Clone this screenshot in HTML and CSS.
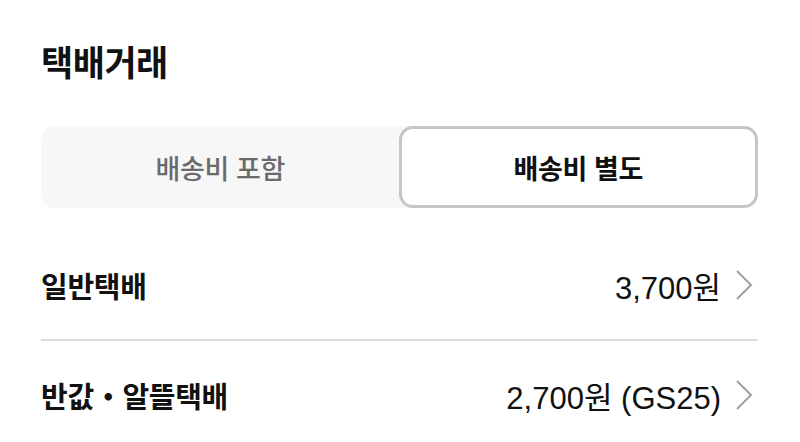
FILE: index.html
```html
<!DOCTYPE html>
<html lang="ko">
<head>
<meta charset="utf-8">
<link rel="stylesheet" href="styles.css">
</head>
<body>
<div class="page">
  <h1 class="title">택배거래</h1>
  <div class="segment">
    <div class="seg-item">배송비 포함</div>
    <div class="seg-item active">배송비 별도</div>
  </div>
  <ul class="rows">
    <li class="row">
      <span class="label">일반택배</span>
      <span class="value">3,700원
        <svg class="chev" width="18" height="32" viewBox="0 0 18 32"><polyline points="2,2 16,16 2,30" fill="none" stroke="#a0a0a0" stroke-width="2"/></svg>
      </span>
    </li>
    <li class="row">
      <span class="label">반값・알뜰택배</span>
      <span class="value">2,700원 (GS25)
        <svg class="chev" width="18" height="32" viewBox="0 0 18 32"><polyline points="2,2 16,16 2,30" fill="none" stroke="#a0a0a0" stroke-width="2"/></svg>
      </span>
    </li>
  </ul>
</div>
</body>
</html>
```

FILE: styles.css
```css
html, body {
  margin: 0;
  padding: 0;
  background: #ffffff;
}
body {
  font-family: "Noto Sans CJK KR", "Noto Sans", sans-serif;
  color: #111111;
}
.page {
  padding: 36px 42px 0 41px;
}
.title {
  margin: 0;
  font-size: 35px;
  font-weight: 700;
  line-height: 50px;
  letter-spacing: -0.5px;
}
.segment {
  margin-top: 40px;
  display: grid;
  grid-template-columns: 1fr 1fr;
  height: 82px;
  background: #f7f7f7;
  border-radius: 14px;
}
.seg-item {
  display: flex;
  align-items: center;
  justify-content: center;
  font-size: 27px;
  font-weight: 500;
  color: #6b6b6b;
  letter-spacing: -0.4px;
}
.seg-item.active {
  background: #ffffff;
  border: 3px solid #c6c6c6;
  border-radius: 14px;
  color: #111111;
  font-weight: 700;
  margin-left: -1px;
}
.rows {
  list-style: none;
  margin: 23px 0 0;
  padding: 0;
}
.row {
  display: flex;
  align-items: center;
  justify-content: space-between;
  height: 108px;
}
.row + .row {
  border-top: 2px solid #dcdcdc;
}
.label {
  font-size: 29px;
  font-weight: 700;
  letter-spacing: -0.3px;
}
.value {
  display: flex;
  align-items: center;
  font-family: "Liberation Sans", "Noto Sans CJK KR", sans-serif;
  font-size: 31px;
  font-weight: 400;
}
.chev {
  margin-left: 14px;
  margin-right: 5px;
}
```
